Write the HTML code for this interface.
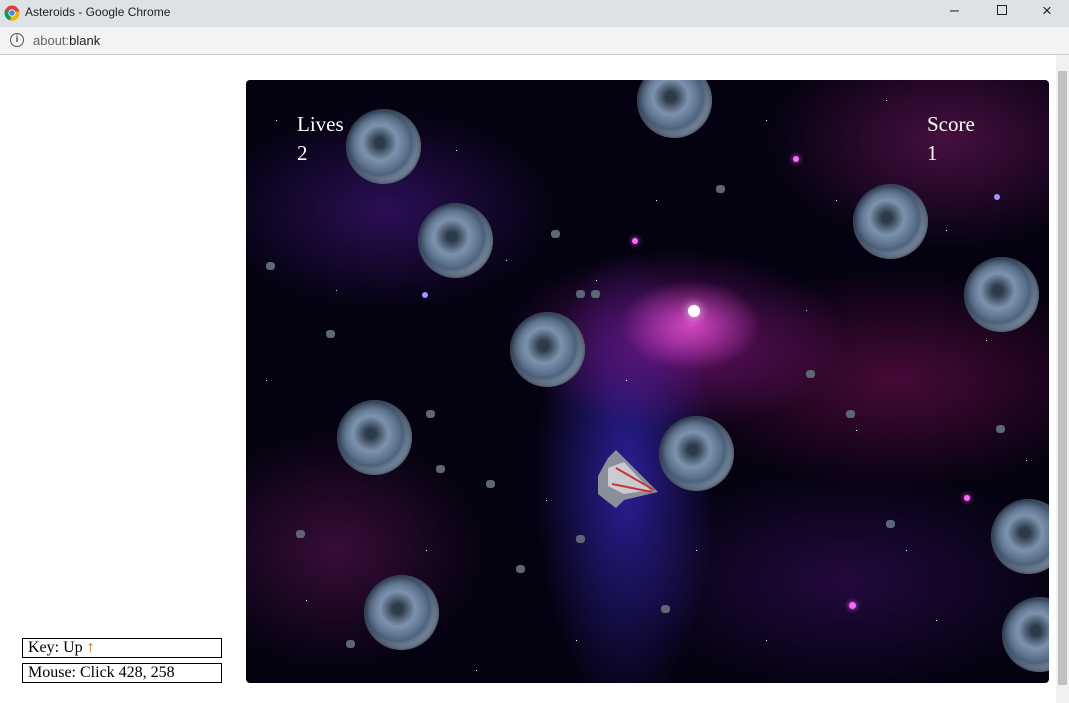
<!DOCTYPE html>
<html><head><style>
*{margin:0;padding:0;box-sizing:border-box}
body{width:1069px;height:703px;overflow:hidden;background:#fff;font-family:"Liberation Serif",serif;position:relative}
.title{position:absolute;left:0;top:0;width:1069px;height:27px;background:#dee1e6;font:12px "Liberation Sans",sans-serif;color:#222}
.addr{position:absolute;left:0;top:27px;width:1069px;height:28px;background:#f1f3f4;border-bottom:1px solid #c8c8c8;font:13px "Liberation Sans",sans-serif}
.sb{position:absolute;left:1056px;top:55px;width:13px;height:648px;background:#f1f1f1}
.sb div{position:absolute;left:2px;top:16px;width:9px;height:614px;background:#c1c1c1}
#c{position:absolute;left:246px;top:80px;width:803px;height:603px;border-radius:4px;overflow:hidden;
background:
radial-gradient(ellipse 70px 45px at 445px 245px,rgba(255,90,230,.75),transparent),
radial-gradient(ellipse 170px 90px at 430px 260px,rgba(190,30,190,.5),transparent),
radial-gradient(ellipse 90px 230px at 380px 400px,rgba(70,50,240,.6),transparent),
radial-gradient(ellipse 230px 110px at 650px 300px,rgba(170,20,110,.4),transparent),
radial-gradient(ellipse 170px 100px at 140px 130px,rgba(90,30,170,.45),transparent),
radial-gradient(ellipse 150px 120px at 90px 470px,rgba(130,30,110,.4),transparent),
radial-gradient(ellipse 180px 110px at 700px 60px,rgba(150,30,120,.45),transparent),
radial-gradient(ellipse 220px 110px at 600px 500px,rgba(80,20,130,.4),transparent),
#040210}
#c::before{content:"";position:absolute;left:0;top:0;width:1px;height:1px;background:#fff;
box-shadow:30px 40px #fff,90px 210px #ccf,140px 330px #fff,60px 520px #fff,210px 70px #fff,260px 180px #ddf,300px 420px #fff,330px 560px #fff,410px 120px #fff,470px 390px #fff,520px 40px #fff,560px 230px #ccf,610px 350px #fff,660px 470px #fff,700px 150px #fff,740px 260px #fff,780px 380px #fff,760px 560px #fff,230px 590px #fff,180px 470px #fff,520px 560px #fff,380px 300px #fff,120px 60px #fff,640px 20px #fff,20px 300px #fff,450px 470px #fff,590px 120px #fff,690px 540px #fff,350px 200px #fff,270px 280px #fff}
.a{position:absolute;width:75px;height:75px;border-radius:50%;background:radial-gradient(circle at 45% 45%,#2c3a4a 8%,#7d93ad 30%,#4f6580 55%,#9fb2c6 70%,#3a4b60);box-shadow:inset 0 0 10px #0a0d18}
.r{position:absolute;width:9px;height:8px;border-radius:40%;background:#5d6673}
.t{position:absolute;color:#fff;font-size:21px;line-height:29px}
.box{position:absolute;left:22px;width:200px;height:20px;border:1px solid #000;font-size:16px;line-height:18px;padding-left:5px}
.st{position:absolute;width:2px;height:2px;background:#fff;border-radius:50%}
</style></head><body>
<div class="title"><svg style="position:absolute;left:4px;top:5px" width="16" height="16" viewBox="0 0 16 16"><circle cx="8" cy="8" r="7.5" fill="#db4437"/><path d="M8 8 L1.5 4.5 A7.5 7.5 0 0 0 6 15.3Z" fill="#0f9d58"/><path d="M8 8 L6 15.3 A7.5 7.5 0 0 0 15.4 6.5 L8 6.5Z" fill="#f4b400"/><circle cx="8" cy="8" r="3.6" fill="#fff"/><circle cx="8" cy="8" r="2.8" fill="#4285f4"/></svg><span style="position:absolute;left:25px;top:5px">Asteroids - Google Chrome</span>
<span style="position:absolute;left:950px;top:2px;font-size:16px">&#8211;</span><span style="position:absolute;left:997px;top:5px;width:10px;height:10px;border:1px solid #222"></span><span style="position:absolute;left:1042px;top:1px;font-size:17px">&#215;</span></div>
<div class="addr"><span style="position:absolute;left:10px;top:6px;width:14px;height:14px;border:1.5px solid #555;border-radius:50%;font-size:10px;line-height:11px;text-align:center;color:#555;font-weight:bold">i</span><span style="position:absolute;left:33px;top:6px;color:#666">about:<span style="color:#222">blank</span></span></div>
<div class="sb"><div></div></div>
<div id="c">
<div class="r" style="left:20px;top:182px"></div><div class="r" style="left:80px;top:250px"></div><div class="r" style="left:305px;top:150px"></div><div class="r" style="left:330px;top:210px"></div><div class="r" style="left:470px;top:105px"></div><div class="r" style="left:180px;top:330px"></div><div class="r" style="left:240px;top:400px"></div><div class="r" style="left:190px;top:385px"></div><div class="r" style="left:50px;top:450px"></div><div class="r" style="left:270px;top:485px"></div><div class="r" style="left:415px;top:525px"></div><div class="r" style="left:600px;top:330px"></div><div class="r" style="left:750px;top:345px"></div><div class="r" style="left:640px;top:440px"></div><div class="r" style="left:100px;top:560px"></div><div class="r" style="left:560px;top:290px"></div><div class="r" style="left:345px;top:210px"></div><div class="r" style="left:330px;top:455px"></div>
<div class="st" style="left:442px;top:225px;width:12px;height:12px;box-shadow:0 0 10px #fff"></div>
<div class="st" style="left:547px;top:76px;width:6px;height:6px;background:#f6f;box-shadow:0 0 6px #f6f"></div>
<div class="st" style="left:386px;top:158px;width:6px;height:6px;background:#f6f;box-shadow:0 0 6px #f6f"></div>
<div class="st" style="left:748px;top:114px;width:6px;height:6px;background:#99f"></div>
<div class="st" style="left:603px;top:522px;width:7px;height:7px;background:#f6f;box-shadow:0 0 6px #f6f"></div>
<div class="st" style="left:718px;top:415px;width:6px;height:6px;background:#f6f;box-shadow:0 0 6px #f6f"></div>
<div class="st" style="left:176px;top:212px;width:6px;height:6px;background:#99f"></div>
<div class="a" style="left:100px;top:29px"></div>
<div class="a" style="left:391px;top:-17px"></div>
<div class="a" style="left:172px;top:123px"></div>
<div class="a" style="left:264px;top:232px"></div>
<div class="a" style="left:91px;top:320px"></div>
<div class="a" style="left:607px;top:104px"></div>
<div class="a" style="left:718px;top:177px"></div>
<div class="a" style="left:413px;top:336px"></div>
<div class="a" style="left:118px;top:495px"></div>
<div class="a" style="left:745px;top:419px"></div>
<div class="a" style="left:756px;top:517px"></div>
<svg style="position:absolute;left:348px;top:366px" width="68" height="64" viewBox="0 0 68 64"><polygon points="4,30 14,12 22,4 30,12 64,46 30,54 22,62 14,56 4,48" fill="#8a909a"/><polygon points="14,22 30,16 56,44 30,48 14,40" fill="#c8ccd2"/><path d="M22 22 L60 44 M18 38 L58 46" stroke="#c33" stroke-width="2"/></svg>
<div class="t" style="left:51px;top:30px">Lives<br>2</div>
<div class="t" style="left:681px;top:30px">Score<br>1</div>
</div>
<div class="box" style="top:638px">Key: Up <span style="color:#c60">&#8593;</span></div>
<div class="box" style="top:663px">Mouse: Click 428, 258</div>
</body></html>
